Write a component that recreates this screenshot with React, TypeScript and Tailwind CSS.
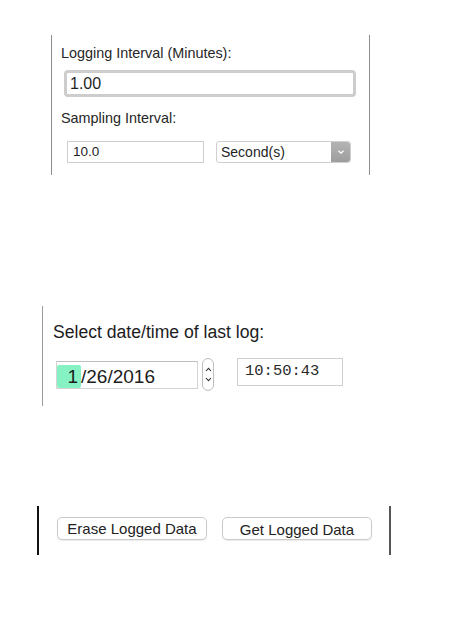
import React from "react";

export default function App() {
  return (
    <div
      className="w-[459px] h-[623px] bg-white overflow-hidden text-[#262626]"
      style={{ fontFamily: '"Liberation Sans", Arial, sans-serif' }}
    >
      {/* Section 1 */}
      <div className="mt-[35px] ml-[51px] w-[319px] h-[140px] border-l border-r border-[#8d8d8d] pt-[10px]">
        <div className="ml-[9px] text-[14.4px] leading-[16px]">Logging Interval (Minutes):</div>
        <div className="ml-[12px] mt-[9px] w-[292px] h-[27px] rounded-[4px] border-[3px] border-[#cdcdcd] bg-white flex items-center pl-[3px] text-[16px] text-[#1f1f1f]">
          1.00
        </div>
        <div className="ml-[9px] mt-[13px] text-[14.4px] leading-[16px]">Sampling Interval:</div>
        <div className="mt-[15px] flex">
          <div className="ml-[15px] w-[137px] h-[22px] border border-[#cfcfcf] flex items-center pl-[5px] text-[13.5px] text-[#1f1f1f]">
            10.0
          </div>
          <div className="ml-[12px] w-[135px] h-[22px] border border-[#cfcfcf] rounded-[3px] flex items-stretch">
            <div className="flex-1 flex items-center pl-[4px] text-[14px] text-[#1f1f1f]">Second(s)</div>
            <div className="w-[19px] bg-gradient-to-b from-[#b4b4b4] to-[#9d9d9d] rounded-r-[3px] flex items-center justify-center">
              <svg width="8" height="6" viewBox="0 0 8 6">
                <path d="M1.5 1.8 L4 4.2 L6.5 1.8" fill="none" stroke="#fff" strokeWidth="1.3" />
              </svg>
            </div>
          </div>
        </div>
      </div>

      {/* Section 2 */}
      <div className="mt-[131px] ml-[42px] h-[100px] border-l border-[#9a9a9a] pt-[16px]">
        <div className="ml-[10px] text-[17.6px] leading-[20px] text-[#1c1c1c]">Select date/time of last log:</div>
        <div className="mt-[16px] flex items-start">
          <div className="ml-[13px] mt-[3px] w-[142px] h-[28px] border border-[#d4d4d4] border-t-[#bdbdbd] flex items-end text-[19px] leading-[23px] text-[#1c1c1c]">
            <span className="w-[24px] h-[23px] bg-[#86f2c4] rounded-[2px] text-right pr-[3px]">1</span>
            <span className="h-[23px]">/26/2016</span>
          </div>
          <div className="ml-[4px] w-[12px] h-[33px] border border-[#bdbdbd] rounded-[6px] flex flex-col items-center justify-center gap-[5px] bg-white">
            <svg width="7" height="5" viewBox="0 0 7 5">
              <path d="M1 4 L3.5 1.3 L6 4" fill="none" stroke="#333" strokeWidth="1.1" />
            </svg>
            <svg width="7" height="5" viewBox="0 0 7 5">
              <path d="M1 1 L3.5 3.7 L6 1" fill="none" stroke="#333" strokeWidth="1.1" />
            </svg>
          </div>
          <div
            className="ml-[23px] w-[106px] h-[28px] border border-[#cfcfcf] flex items-center pl-[7px] text-[15.5px] text-[#2a2a2a]"
            style={{ fontFamily: '"Liberation Mono", "Courier New", monospace' }}
          >
            10:50:43
          </div>
        </div>
      </div>

      {/* Section 3 */}
      <div className="mt-[100px] ml-[37px] w-[354px] h-[49px] border-l-2 border-l-[#111] border-r-2 border-r-[#555] pt-[11px] flex items-start">
        <button className="ml-[18px] w-[150px] h-[23px] border border-[#cacaca] rounded-[5px] bg-white shadow-[0_1px_1px_rgba(0,0,0,0.08)] text-[15px] leading-[20px] text-[#222] flex items-center justify-center">
          Erase Logged Data
        </button>
        <button className="ml-[15px] w-[150px] h-[23px] border border-[#cacaca] rounded-[5px] bg-white shadow-[0_1px_1px_rgba(0,0,0,0.08)] text-[15px] leading-[20px] text-[#222] flex items-center justify-center pt-[2px]">
          Get Logged Data
        </button>
      </div>
    </div>
  );
}
